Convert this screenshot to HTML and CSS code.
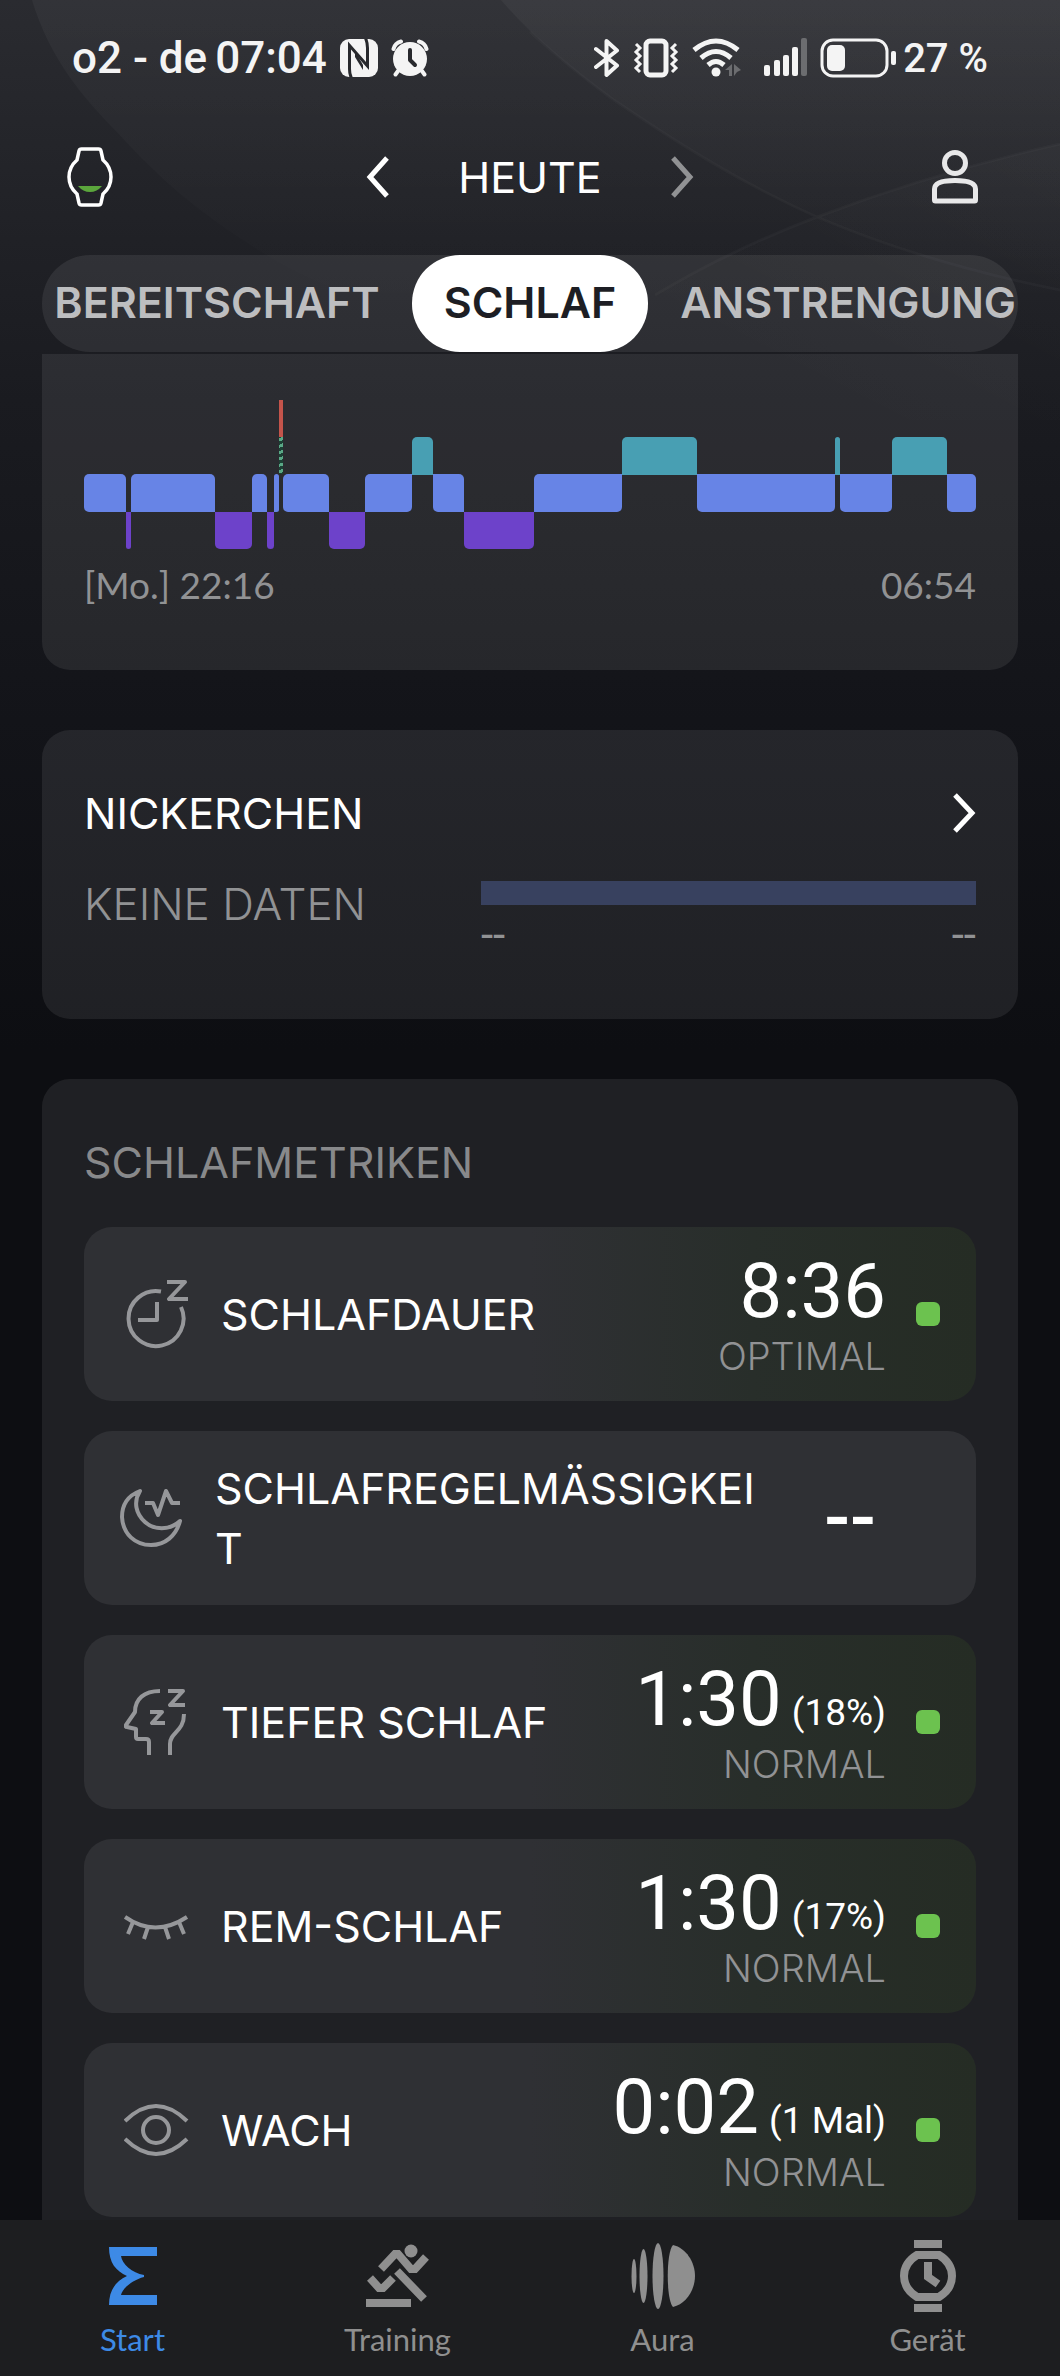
FILE: index.html
```html
<!DOCTYPE html>
<html lang="de">
<head>
    <meta charset="UTF-8">
    <meta name="viewport" content="width=device-width, initial-scale=1.0">
    <title>Schlaf</title>
    <link rel="stylesheet" href="styles.css">
</head>
<body>

    <svg class="backdrop" viewBox="0 0 1060 420" preserveAspectRatio="none" aria-hidden="true">
        <defs>
            <linearGradient id="fade" x1="0" y1="0" x2="0" y2="1">
                <stop offset="0" stop-color="#fff" stop-opacity="0.04"/>
                <stop offset="1" stop-color="#fff" stop-opacity="0"/>
            </linearGradient>
            <linearGradient id="fadeRight" x1="1" y1="0" x2="0" y2="1">
                <stop offset="0" stop-color="#fff" stop-opacity="0.025"/>
                <stop offset="0.7" stop-color="#fff" stop-opacity="0"/>
            </linearGradient>
        </defs>
        <path d="M32 0C50 60 85 100 118 133C160 180 200 212 243 240C290 272 340 295 400 310H1060V0Z" fill="url(#fade)"/>
        <path d="M501 0C530 34 570 68 611 98C680 145 745 185 817 217C890 248 970 272 1060 290V0Z" fill="url(#fade)"/>
        <path d="M1060 144Q935 172 817 217Q730 250 655 295L520 420H1060Z" fill="url(#fadeRight)"/>
        <path d="M530 32C570 68 611 98 611 98C680 145 745 185 817 217C890 248 970 272 1060 290M1060 144Q935 172 817 217Q730 250 655 295" fill="none" stroke="#fff" stroke-opacity="0.025" stroke-width="3"/>
    </svg>

    <div class="status-bar">
        <div class="status-left">
            <span>o2 - de</span>
            <span>07:04</span>
            <svg class="nfc" width="38" height="38" viewBox="0 0 38 38">
                <rect width="38" height="38" rx="9" fill="#f4f4f4"/>
                <path d="M12 40Q9.500 36 9.500 30V6.500L27.500 27V9Q27.500 3 25-2" fill="none" stroke="#28292d" stroke-width="3"/>
                <path d="M15 18V12L23 26V31Z" fill="#28292d"/>
            </svg>
            <svg width="38" height="38" viewBox="0 0 38 38">
                <circle cx="19" cy="20" r="17" fill="#f4f4f4"/>
                <path d="M2.500 10Q4 4 10 2.500M28 2.500Q34 4 35.500 10M7 32L4.500 35.500M31 32L33.500 35.500" fill="none" stroke="#f4f4f4" stroke-width="4" stroke-linecap="round"/>
                <path d="M19 11V21L24 26" fill="none" stroke="#28292d" stroke-width="4" stroke-linecap="round" stroke-linejoin="round"/>
            </svg>
        </div>
        <div class="status-right">
            <svg width="26" height="40" viewBox="0 0 26 40">
                <path d="M2 11L23 27.500L12.500 37V3L23 12.500L2 29" fill="none" stroke="#f4f4f4" stroke-width="4" stroke-linejoin="round" stroke-linecap="round"/>
            </svg>
            <svg width="48" height="40" viewBox="0 0 48 40" fill="none" stroke="#f4f4f4">
                <rect x="14" y="3" width="20" height="34" rx="4" stroke-width="5"/>
                <path d="M4 6L8 10L4 14L8 18L4 22L8 26L4 30L8 34M44 6L40 10L44 14L40 18L44 22L40 26L44 30L40 34" stroke-width="3"/>
            </svg>
            <svg class="wifi" width="50" height="40" viewBox="0 0 50 40">
                <path d="M2 12Q24-6 46 12M9 20Q24 7 39 20M16 27Q24 20 32 27" fill="none" stroke="#f4f4f4" stroke-width="5"/>
                <circle cx="24" cy="34" r="4.500" fill="#f4f4f4"/>
                <path d="M33 32L40 26V38H37V32ZM42 38V26L49 32L45 34Z" fill="#6c6d70"/>
            </svg>
            <svg width="44" height="40" viewBox="0 0 44 40" fill="#f4f4f4">
                <rect x="0" y="27" width="6" height="11" rx="2"/>
                <rect x="10" y="22" width="6" height="16" rx="2"/>
                <rect x="19" y="17" width="6" height="21" rx="2"/>
                <rect x="28" y="9" width="6" height="29" rx="2"/>
                <rect x="37" y="0" width="6" height="38" rx="2" fill="#6c6d70"/>
            </svg>
            <svg class="battery" width="77" height="40" viewBox="0 0 77 40">
                <rect x="2" y="2" width="65" height="36" rx="11" fill="none" stroke="#f4f4f4" stroke-width="3"/>
                <rect x="7" y="7" width="18" height="26" rx="5" fill="#f4f4f4"/>
                <rect x="71" y="13" width="5" height="14" rx="2" fill="#f4f4f4"/>
            </svg>
            <span class="percent">27 %</span>
        </div>
    </div>

    <header class="header">
        <button class="watch" aria-label="Uhr">
            <svg width="46" height="60" viewBox="0 0 46 60">
                <path d="M12 4Q12.500 2 14.500 2H31.500Q33.500 2 34 4L36 13Q44 20 44 30Q44 40 36 47L34 56Q33.500 58 31.500 58H14.500Q12.500 58 12 56L10 47Q2 40 2 30Q2 20 10 13Z" fill="none" stroke="#fff" stroke-width="3.500"/>
                <path d="M11 39H35Q30 45 23 45Q16 45 11 39Z" fill="#5ba63c"/>
            </svg>
        </button>
        <div class="day-picker">
            <button aria-label="Vorheriger Tag">
                <svg width="24" height="42" viewBox="0 0 24 42"><path d="M21 2L4 21L21 40" fill="none" stroke="#fff" stroke-width="5"/></svg>
            </button>
            <h1 class="day">HEUTE</h1>
            <button aria-label="Nächster Tag">
                <svg width="24" height="42" viewBox="0 0 24 42"><path d="M3 2L20 21L3 40" fill="none" stroke="#919294" stroke-width="5"/></svg>
            </button>
        </div>
        <button class="profile" aria-label="Profil">
            <svg width="46" height="54" viewBox="0 0 46 54" fill="none" stroke="#e8e8e9" stroke-width="5">
                <circle cx="23" cy="13" r="10.500"/>
                <path d="M2.500 50V39Q2.500 30.500 23 30.500Q43.500 30.500 43.500 39V50Q43.500 51 42.500 51H3.500Q2.500 51 2.500 50Z"/>
            </svg>
        </button>
    </header>

    <div class="tabs">
        <button class="tab tab-left">BEREITSCHAFT</button>
        <button class="tab active">SCHLAF</button>
        <button class="tab tab-right">ANSTRENGUNG</button>
    </div>

    <main class="content">
        <section class="card chart-card">
            <!-- one segment per sleep phase, flex-grow is its duration -->
            <div class="chart">
                <span class="light" style="flex-grow: 83"></span>
                <span class="deep" style="flex-grow: 11"></span>
                <span class="light" style="flex-grow: 168"></span>
                <span class="deep" style="flex-grow: 73"></span>
                <span class="light" style="flex-grow: 31"></span>
                <span class="deep" style="flex-grow: 14"></span>
                <span class="light" style="flex-grow: 10"></span>
                <span class="wake" style="flex-grow: 8"></span>
                <span class="light" style="flex-grow: 92"></span>
                <span class="deep" style="flex-grow: 72"></span>
                <span class="light" style="flex-grow: 94"></span>
                <span class="rem" style="flex-grow: 42"></span>
                <span class="light" style="flex-grow: 62"></span>
                <span class="deep" style="flex-grow: 140"></span>
                <span class="light" style="flex-grow: 176"></span>
                <span class="rem" style="flex-grow: 149"></span>
                <span class="light" style="flex-grow: 276"></span>
                <span class="rem" style="flex-grow: 11"></span>
                <span class="light" style="flex-grow: 104"></span>
                <span class="rem" style="flex-grow: 110"></span>
                <span class="light" style="flex-grow: 58"></span>
            </div>
            <div class="chart-times">
                <span>[Mo.] 22:16</span>
                <span>06:54</span>
            </div>
        </section>

        <section class="card nap-card">
            <a class="nap-head" href="#nickerchen">
                <span>NICKERCHEN</span>
                <svg width="24" height="42" viewBox="0 0 24 42"><path d="M3 3L20 21L3 39" fill="none" stroke="#fff" stroke-width="5"/></svg>
            </a>
            <div class="nap-body">
                <span class="nap-empty">KEINE DATEN</span>
                <div class="nap-range">
                    <div class="nap-bar"></div>
                    <div class="nap-times"><span>--</span><span>--</span></div>
                </div>
            </div>
        </section>

        <section class="card metrics">
            <h2 class="metrics-title">SCHLAFMETRIKEN</h2>

            <div class="metric good">
                <svg class="metric-icon" width="68" height="70" viewBox="0 0 68 70">
                    <path d="M37 12.500A27.500 27.500 0 1 0 57 28M33 23V41H14M43 3H61L45 20H64"/>
                </svg>
                <span class="metric-name">SCHLAFDAUER</span>
                <div class="metric-data">
                    <div class="metric-value"><span>8:36</span></div>
                    <div class="metric-level">OPTIMAL</div>
                </div>
                <span class="dot"></span>
            </div>

            <div class="metric wide">
                <svg class="metric-icon" width="62" height="62" viewBox="0 0 62 62">
                    <path d="M20 4C7 9 2 19 2 30C3 47 15 58 31 58C45 58 56 49 60 34C49 44 34 43 25 35C16 27 13 15 20 4ZM25 16H33L38 28L46 4L52 16H60"/>
                </svg>
                <span class="metric-name">SCHLAFREGELMÄSSIGKEIT</span>
                <div class="metric-none">--</div>
            </div>

            <div class="metric good">
                <svg class="metric-icon" width="68" height="70" viewBox="0 0 68 70">
                    <path d="M36 4C20 4 11 12 11 25L2 38Q1 40 3 40L12 42V50Q12 52 14 52H22Q25 52 25 55V68M46 68V57C46 45 60 45 60 27M44 4H59L46 18H61M26 25H38L28 36H41"/>
                </svg>
                <span class="metric-name">TIEFER SCHLAF</span>
                <div class="metric-data">
                    <div class="metric-value"><span>1:30</span><small>(18%)</small></div>
                    <div class="metric-level">NORMAL</div>
                </div>
                <span class="dot"></span>
            </div>

            <div class="metric good">
                <svg class="metric-icon" width="68" height="70" viewBox="0 0 68 70">
                    <path d="M1 26Q31 47 63 26M9 31L4 43M24 36L20 48M41 36L45 48M55 31L60 43"/>
                </svg>
                <span class="metric-name">REM-SCHLAF</span>
                <div class="metric-data">
                    <div class="metric-value"><span>1:30</span><small>(17%)</small></div>
                    <div class="metric-level">NORMAL</div>
                </div>
                <span class="dot"></span>
            </div>

            <div class="metric good">
                <svg class="metric-icon" width="68" height="70" viewBox="0 0 68 70">
                    <path d="M1 26Q32-4 63 26M1 44Q32 74 63 44"/>
                    <circle cx="32" cy="35" r="13"/>
                </svg>
                <span class="metric-name">WACH</span>
                <div class="metric-data">
                    <div class="metric-value"><span>0:02</span><small>(1 Mal)</small></div>
                    <div class="metric-level">NORMAL</div>
                </div>
                <span class="dot"></span>
            </div>
        </section>
    </main>

    <nav class="bottom-nav">
        <a class="nav-item current" href="#start">
            <svg width="72" height="76" viewBox="0 0 72 76">
                <path d="M12 9H60V18H24C25 26 35 35 47 37V39C35 42 25 51 24 57H60V67H12C12 52 19 43 30 38C19 33 12 25 12 9Z" fill="currentColor"/>
            </svg>
            <span>Start</span>
        </a>
        <a class="nav-item" href="#training">
            <svg width="72" height="76" viewBox="0 0 72 76">
                <circle cx="49" cy="13" r="6.500" fill="currentColor"/>
                <path d="M19 31L33 16H36L49 31H53L64 19M35 33L62 61M8 40L17 50H21L31 40M4 65H49" fill="none" stroke="currentColor" stroke-width="8"/>
            </svg>
            <span>Training</span>
        </a>
        <a class="nav-item" href="#aura">
            <svg width="72" height="76" viewBox="0 0 72 76" fill="currentColor">
                <ellipse cx="7" cy="38" rx="2.500" ry="17"/>
                <ellipse cx="16.500" cy="38" rx="4" ry="27"/>
                <ellipse cx="31" cy="38" rx="5.500" ry="33"/>
                <path d="M46 7C59 10 68 24 68 38C68 52 59 66 46 69C39 62 39 14 46 7Z"/>
            </svg>
            <span>Aura</span>
        </a>
        <a class="nav-item" href="#geraet">
            <svg width="72" height="76" viewBox="0 0 72 76">
                <path d="M22 2H50V10H22ZM22 66H50V74H22Z" fill="currentColor"/>
                <path d="M25 17H47Q60 25 60 38Q60 51 47 59H25Q12 51 12 38Q12 25 25 17ZM36 24V39L46 46" fill="none" stroke="currentColor" stroke-width="8"/>
            </svg>
            <span>Gerät</span>
        </a>
    </nav>

</body>
</html>
```

FILE: styles.css
```css
* {
    box-sizing: border-box;
}
body {
    margin: 0;
    height: 100vh;
    display: flex;
    flex-direction: column;
    position: relative;
    overflow: hidden;
    background: linear-gradient(#2a2b30 0, #202126 240px, #1a1b20 400px, #131419 720px, #0d0e12 1050px);
    color: #fff;
    font-family: Inter, sans-serif;
    font-size: 43px;
}
button {
    border: none;
    background: none;
    padding: 0;
    color: inherit;
    font: inherit;
    cursor: pointer;
}
a {
    color: inherit;
    text-decoration: none;
}
svg {
    display: block;
    flex-shrink: 0;
}
.backdrop {
    position: absolute;
    top: 0;
    left: 0;
    width: 100%;
    height: 420px;
    z-index: -1;
}

/* status bar */
.status-bar {
    display: flex;
    justify-content: space-between;
    align-items: center;
    height: 116px;
    padding: 0 72px;
    font-family: Roboto, sans-serif;
    font-size: 44px;
    font-weight: 500;
    color: #f4f4f4;
}
.status-left {
    display: flex;
    align-items: center;
    gap: 8px;
}
.nfc {
    margin: 0 5px;
}
.status-right {
    display: flex;
    align-items: center;
    gap: 12px;
}
.wifi {
    margin-right: 10px;
}
.percent {
    font-size: 40px;
    margin-left: -6px;
}

/* header */
.header {
    display: grid;
    grid-template-columns: 1fr auto 1fr;
    align-items: center;
    height: 122px;
    padding: 0 67px;
}
.watch {
    justify-self: start;
}
.profile {
    justify-self: end;
    margin-right: 15px;
}
.day-picker {
    display: flex;
    align-items: center;
    gap: 68px;
}
.day {
    margin: 0;
    font-size: 43px;
    font-weight: 400;
}

/* tabs */
.tabs {
    display: grid;
    grid-template-columns: minmax(0, 1fr) auto minmax(0, 1fr);
    height: 97px;
    margin: 17px 42px 0;
    border-radius: 48px;
    background: rgba(255, 255, 255, 0.08);
    overflow: hidden;
}
.tab {
    padding: 0 32px 4px;
    font-weight: 600;
    white-space: nowrap;
    color: #bdbec0;
}
.tab-left {
    padding-left: 0;
    text-align: right;
}
.tab-right {
    padding-right: 0;
    text-align: left;
}
.active {
    border-radius: 48px;
    background: #fff;
    color: #1d1e24;
}

/* cards */
.content {
    flex: 1;
    min-height: 0;
    display: flex;
    flex-direction: column;
    gap: 60px;
    margin-top: 2px;
    padding: 0 42px;
    overflow-y: auto;
    scrollbar-width: none;
}
.card {
    flex-shrink: 0;
    padding: 46px 42px;
    border-radius: 28px;
    background: rgba(255, 255, 255, 0.08);
}
.chart-card {
    border-radius: 0 0 28px 28px;
    padding-bottom: 62px;
}
.chart {
    display: flex;
    align-items: flex-start;
    height: 150px;
}
.chart span {
    flex-basis: 0;
    min-width: 0;
    height: 38px;
}
.chart .light {
    margin-top: 74px;
    border-radius: 5px;
    background: #6784e6;
}
.chart .deep {
    margin-top: 112px;
    height: 37px;
    border-radius: 0 0 5px 5px;
    background: #6d42ca;
}
.chart .rem {
    margin-top: 37px;
    border-radius: 5px 5px 0 0;
    background: #489fb3;
}
.chart .wake {
    height: 74px;
    background: linear-gradient(#c4544b 37px, transparent 37px),
        repeating-linear-gradient(160deg, #5aa886 0 3px, #1c4034 3px 6px);
}
/* square corners where a light phase meets its neighbour */
.chart .deep + .light {
    border-bottom-left-radius: 0;
}
.chart .rem + .light {
    border-top-left-radius: 0;
}
.chart .light:has(+ .deep) {
    border-bottom-right-radius: 0;
}
.chart .light:has(+ .rem) {
    border-top-right-radius: 0;
}
.chart-times {
    display: flex;
    justify-content: space-between;
    margin-top: 12px;
    font-family: Lato, sans-serif;
    font-size: 37px;
    line-height: 46px;
    color: #919294;
}

/* naps */
.nap-card {
    height: 289px;
    padding-top: 56px;
}
.nap-head {
    display: flex;
    justify-content: space-between;
    align-items: center;
    line-height: 54px;
}
.nap-body {
    display: flex;
    justify-content: space-between;
    margin-top: 37px;
}
.nap-empty {
    font-size: 44px;
    font-weight: 300;
    line-height: 54px;
    color: #919294;
}
.nap-range {
    width: 55.5%;
    padding-top: 4px;
}
.nap-bar {
    height: 24px;
    background: #38415f;
}
.nap-times {
    display: flex;
    justify-content: space-between;
    margin-top: 4px;
    font-family: Roboto, sans-serif;
    font-size: 44px;
    line-height: 52px;
    color: #919294;
}

/* sleep metrics */
.metrics {
    display: flex;
    flex-direction: column;
    gap: 30px;
    padding-top: 56px;
}
.metrics-title {
    margin: 0 0 8px;
    font-size: 43px;
    font-weight: 400;
    line-height: 54px;
    color: #88898b;
}
.metric {
    display: flex;
    align-items: center;
    height: 174px;
    padding: 0 36px 0 40px;
    border-radius: 28px;
    background: #2f3034;
}
.good {
    background: linear-gradient(90deg, #2f3034 50%, #282e2a 75%, #252c24 100%);
}
.wide {
    padding-left: 36px;
}
.metric-icon {
    margin-right: 29px;
    fill: none;
    stroke: #96979a;
    stroke-width: 4;
    stroke-linejoin: round;
}
.wide .metric-icon {
    margin-right: 33px;
}
.metric-name {
    flex: 1;
    line-height: 60px;
}
.wide .metric-name {
    flex: none;
    width: 545px;
    word-break: break-all;
}
.metric-data {
    padding-bottom: 2px;
    text-align: right;
}
.metric-value {
    display: flex;
    justify-content: flex-end;
    align-items: baseline;
    gap: 10px;
    font-family: Roboto, sans-serif;
    font-size: 76px;
    line-height: 86px;
}
.metric-value small {
    font-size: 37px;
    line-height: 44px;
}
.metric-level {
    font-size: 38px;
    font-weight: 300;
    line-height: 44px;
    color: #919294;
}
.metric-none {
    flex: 1;
    text-align: center;
    font-family: Roboto, sans-serif;
    font-size: 76px;
    font-weight: 500;
}
.dot {
    width: 24px;
    height: 24px;
    margin-left: 30px;
    border-radius: 6px;
    background: #6cc24f;
}

/* bottom navigation */
.bottom-nav {
    display: flex;
    height: 156px;
    background: #1d1e20;
}
.nav-item {
    flex: 1;
    display: flex;
    flex-direction: column;
    align-items: center;
    gap: 5px;
    padding-top: 18px;
    font-family: Lato, sans-serif;
    font-size: 31px;
    line-height: 40px;
    color: #8f8f8f;
}
.current {
    color: #3d8ae6;
}
```
